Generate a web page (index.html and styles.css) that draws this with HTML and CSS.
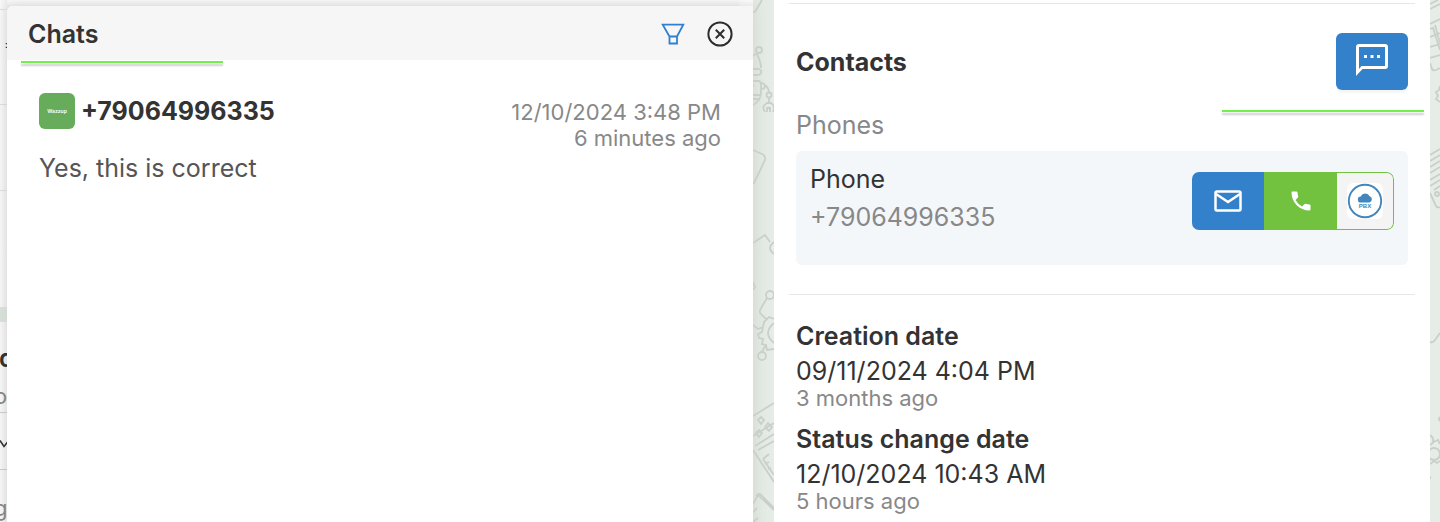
FILE: index.html
```
<!DOCTYPE html>
<html lang="en">
<head>
  <meta charset="UTF-8">
  <meta name="viewport" content="width=device-width, initial-scale=1.0">
  <title>Chats</title>
  <link rel="stylesheet" href="styles.css">
</head>
<body>
  <div class="page">
    <!-- Edge of the page under the chat panel -->
    <aside class="under-page">
      <div class="under-row row-top"></div>
      <div class="under-row row-equals">=</div>
      <div class="under-row row-middle"></div>
      <div class="under-row row-empty"></div>
      <div class="under-gap"></div>
      <div class="under-text strong">d</div>
      <div class="under-text">o</div>
      <div class="under-select">
        <svg width="14" height="10" viewBox="0 0 14 10"><path d="M0 1.5L4 7.500L10 0" fill="none" stroke="#333" stroke-width="1.6"/></svg>
      </div>
      <div class="under-text last">g</div>
    </aside>

    <section class="chat-panel">
      <header class="chat-header">
        <h2>Chats</h2>
        <div class="chat-tools">
          <button class="icon-button" aria-label="Filter">
            <svg width="24" height="24" viewBox="0 0 24 24" fill="none" stroke="#2f80d0" stroke-width="1.8"><path d="M1.700 2.600H22.300L16 14.500H8.500ZM8.500 14.500V21.500H16V14.500"/></svg>
          </button>
          <button class="icon-button" aria-label="Close">
            <svg width="26" height="26" viewBox="0 0 26 26" fill="none" stroke="#2d2d2d" stroke-width="2"><circle cx="13" cy="13" r="11.600"/><path d="M8.800 8.800l8.400 8.400M17.200 8.800l-8.400 8.400"/></svg>
          </button>
        </div>
      </header>
      <div class="marker"></div>
      <article class="chat-item">
        <div class="chat-row">
          <div class="chat-name">
            <span class="avatar">Wazzup</span>
            <h3>+79064996335</h3>
          </div>
          <div class="chat-time">
            <p>12/10/2024 3:48 PM</p>
            <p>6 minutes ago</p>
          </div>
        </div>
        <p class="chat-message">Yes, this is correct</p>
      </article>
    </section>

    <div class="pattern pattern-left">
      <svg width="21" height="522" viewBox="0 0 21 522">
        <path d="M0 12h1q1 0 1.500-1L9 0"/>
        <circle cx="6" cy="50" r="3"/>
        <path d="M4 53l-4 3M4 54q4 8 4 14M0 69h6q3 1 2 4q-1 2-3 2H0M0 81h5q3 0 3 3v8q0 9-8 13M0 86h1M0 95h8M0 99h7M8 83q4 0 4 3t-4 3M12 85q4 3 4 8M16 98v5M12 112q-4-6 2-9h4q5 3 2 9M14 112v-4h3v4"/>
        <circle cx="16" cy="95" r="2.500"/>
        <path d="M0 150l9 4q4 2 3 6L1 183H0M0 243l12-8 5 7M21 242q-8 6 0 12M0 282l2 5-2 3"/>
        <circle cx="17" cy="295" r="4"/>
        <circle cx="9" cy="356" r="4"/>
        <path d="M14 298l-7 12q-1 3 2 5l4 4M0 325l5 4 5-2 1-5 5-5 5 2M10 327l-1 5-4 2 1 4 4 1-1 5 4 1 1 5 7-1M9 352l3-6M21 323q-12 10 0 20M0 416l21-13M0 436l21-13M2 446l19-12M5 450l16-9M0 450l21 32M10 459l6-5M10 459l11 16M12 464l4-2M15 469l3-1M0 504l5-9 16 15M3 496q3-4 6 0l12 12M0 512l4-4M0 522l5-4"/>
        <path d="M5 420l3-3 3 3-3 4ZM12 427l3-4 4 4-3 4ZM3 433l3-3 3 3-3 4Z"/>
      </svg>
    </div>

    <main class="card">
      <hr>
      <section class="contacts">
        <div class="contacts-header">
          <h2 class="contacts-title">Contacts</h2>
          <button class="message-button" aria-label="Open chat">
            <svg width="32" height="32" viewBox="0 0 32 32"><path fill="#fff" fill-rule="evenodd" d="M0 32V3Q0 0 3 0H29Q32 0 32 3V22Q32 25 29 25H6.500ZM3 25L5.500 22H29V3H3Z"/><path fill="#fff" d="M8 11h3v3H8zM14.500 11h3v3h-3zM21 11h3v3h-3z"/></svg>
          </button>
        </div>
        <div class="marker marker-right"></div>
        <p class="label">Phones</p>
        <div class="phone-box">
          <div>
            <p class="phone-title">Phone</p>
            <p class="phone-number">+79064996335</p>
          </div>
          <div class="phone-actions">
            <button class="mail" aria-label="Send message">
              <svg width="28" height="22" viewBox="0 0 28 22" fill="none" stroke="#fff" stroke-width="2.500"><rect x="1.500" y="1.500" width="25" height="19" rx="1.500"/><path d="M2 4l12 8 12-8"/></svg>
            </button>
            <button class="call" aria-label="Call">
              <svg width="20" height="20" viewBox="0 0 20 20"><path fill="#fff" d="M1 .5H5.500Q6.500.5 6.500 1.500Q6.600 3.500 7.200 5.300Q7.400 6 7 6.400L4.500 9Q7 13.500 11 15.500L13.600 13Q14.100 12.600 14.700 12.800Q16.500 13.400 18.500 13.500Q19.500 13.500 19.500 14.500V18.500Q19.500 19.500 18.500 19.500C8.500 19.500.500 11.500.500 1.500Q.500.500 1 .5Z"/></svg>
            </button>
            <button class="pbx" aria-label="PBX">
              <svg width="36" height="36" viewBox="0 0 36 36"><rect width="36" height="36" rx="6" fill="#fff"/><circle cx="18" cy="18" r="16.200" fill="none" stroke="#4385bd" stroke-width="1.900"/><path fill="#4385bd" d="M14 19.500a3 3 0 0 1-.3-6 5 5 0 0 1 9-.2 3.200 3.200 0 0 1-.5 6.200Z"/><text x="18" y="25" text-anchor="middle">PBX</text></svg>
            </button>
          </div>
        </div>
      </section>
      <hr>
      <dl class="dates">
        <div class="date">
          <dt>Creation date</dt>
          <dd>09/11/2024 4:04 PM</dd>
          <dd class="ago">3 months ago</dd>
        </div>
        <div class="date">
          <dt>Status change date</dt>
          <dd>12/10/2024 10:43 AM</dd>
          <dd class="ago">5 hours ago</dd>
        </div>
      </dl>
    </main>

    <div class="pattern">
      <svg width="10" height="522" viewBox="0 0 10 522">
        <path d="M0 4L8 0M0 9l10-5M0 24l10-5M0 29l3-1 7 22M0 37l10-4M0 47l10-3M0 58l10-3M0 63l2 6q1 2 4 1l4-2M5 25l5 18M10 86l-1 4-3 2 2 4-2 3 4 3M0 155l10-6M0 161l10-6M0 167l10-6M0 173l10-6M0 180l10-6M0 186l10-6M0 193l6 13q1 2 4 1M4 190l6-4"/>
        <circle cx="7" cy="194" r="2"/>
        <path d="M0 342q3 1 5-2l5-7M10 417q-2 2 0 4M0 435l3 3v4l5-2 2 4M0 445l4-3M0 464l4-3 3 2 3-2M0 476v3"/>
        <circle cx="4" cy="454" r="6"/>
      </svg>
    </div>
  </div>
</body>
</html>
```
FILE: styles.css
```
* {
  box-sizing: border-box;
}

body {
  margin: 0;
  font-family: Inter, "Liberation Sans", sans-serif;
  font-size: 25px;
  color: #333;
  background-color: #e6ede7;
}

h2, h3, p, dl, dd {
  margin: 0;
}

h2, h3 {
  font-size: 25px;
  line-height: 32px;
  font-weight: 600;
}

h3,
.contacts-title {
  font-weight: 700;
}

button {
  display: flex;
  align-items: center;
  justify-content: center;
  margin: 0;
  padding: 0;
  border: none;
  cursor: pointer;
}

.page {
  display: grid;
  grid-template-columns: 7px 746fr 21px 656fr 10px;
  height: 100vh;
  overflow: hidden;
  background: linear-gradient(#f8f8f8, #ebebeb) no-repeat 0 0 / 739px 6px,
    linear-gradient(#fbfbfb, #f1f1f1) no-repeat 0 0 / 753px 6px;
}

/* Page under the panel */
.under-page {
  overflow: hidden;
  background: linear-gradient(to right, #f8f8f8, #ebebeb);
}

.under-row {
  border-bottom: 1px solid #dedede;
}

.row-top {
  height: 10px;
}

.row-equals {
  height: 95px;
  padding: 24px 0 0 4px;
  font-size: 16px;
}

.row-middle {
  height: 86px;
}

.row-empty {
  height: 116px;
  border: none;
}

.under-gap {
  height: 15px;
  background-color: #dae3db;
}

.under-text {
  padding-top: 6px;
  margin-left: -6px;
  font-size: 22px;
  line-height: 32px;
  color: #888;
}

.strong {
  padding-top: 20px;
  margin-left: -1px;
  font-size: 25px;
  font-weight: 600;
  color: #333;
}

.under-select {
  height: 58px;
  border-top: 1px solid #ccc;
  border-bottom: 1px solid #ccc;
  padding-top: 12px;
}

.last {
  padding-top: 22px;
}

/* Chat panel */
.chat-panel {
  margin-top: 6px;
  background-color: #fff;
  border-top-left-radius: 6px;
  box-shadow: 0 0 16px rgba(0, 0, 0, 0.08);
  overflow: hidden;
}

.chat-header {
  display: flex;
  align-items: center;
  justify-content: space-between;
  height: 54px;
  padding: 2px 20px 0 21px;
  background-color: #f6f6f6;
}

.chat-tools {
  display: flex;
  align-items: center;
  gap: 22px;
}

.icon-button {
  background: none;
}

.marker {
  width: 202px;
  height: 2px;
  margin: 1px 0 0 14px;
  background-color: #71f04c;
  box-shadow: 0 3px 2px rgba(0, 0, 0, 0.2);
}

.chat-item {
  padding: 30px 32px;
}

.chat-row {
  display: flex;
  justify-content: space-between;
}

.chat-name {
  display: flex;
  align-items: center;
  gap: 6px;
  height: 36px;
}

.avatar {
  display: flex;
  align-items: center;
  justify-content: center;
  width: 36px;
  height: 36px;
  border-radius: 6px;
  background-color: #67ac5b;
  color: #fff;
  font-size: 5px;
  font-weight: 600;
}

.chat-time {
  padding-top: 6px;
  font-size: 22px;
  line-height: 26px;
  text-align: right;
  color: #888;
}

.chat-message {
  padding-top: 1px;
  line-height: 32px;
  color: #555;
}

/* Background drawings */
.pattern {
  overflow: hidden;
}

.pattern svg {
  display: block;
  fill: none;
  stroke: #c9d0ca;
  stroke-width: 1.8;
}

.pattern-left {
  background: linear-gradient(to right, rgba(0, 0, 0, 0.02), transparent);
}

/* Card */
.card {
  padding-top: 3px;
  background-color: #fff;
}

hr {
  height: 1px;
  margin: 0 15px;
  border: none;
  background-color: #e7e7e7;
}

.contacts {
  padding: 29px 22px;
}

.contacts-header {
  display: flex;
  align-items: center;
  justify-content: space-between;
}

.message-button {
  width: 72px;
  height: 57px;
  padding-bottom: 4px;
  border-radius: 6px;
  background-color: #3380cb;
  box-shadow: 0 3px 2px rgba(0, 0, 0, 0.04);
}

.marker-right {
  margin: 20px -16px 0 auto;
}

.label {
  padding-bottom: 13px;
  line-height: 26px;
  color: #888;
}

.phone-box {
  display: flex;
  align-items: flex-start;
  justify-content: space-between;
  min-height: 114px;
  padding: 9px 14px;
  border-radius: 6px;
  background-color: #f3f7fa;
}

.phone-title,
.phone-number {
  line-height: 38px;
}

.phone-number {
  color: #888;
}

.phone-actions {
  display: flex;
  height: 58px;
  margin-top: 12px;
  border-radius: 7px;
  overflow: hidden;
}

.mail {
  width: 72px;
  background-color: #3380cb;
}

.call {
  width: 73px;
  background-color: #72c13f;
}

.pbx {
  width: 57px;
  border: 1px solid #72c13f;
  border-left: none;
  border-radius: 0 7px 7px 0;
  background-color: #f4f4f4;
}

.pbx text {
  font-size: 6px;
  font-weight: 700;
  fill: #4385bd;
}

.dates {
  padding: 22px;
}

.date {
  margin-bottom: 11px;
}

.date dt {
  line-height: 38px;
  font-weight: 600;
}

.date dd {
  line-height: 32px;
}

.date .ago {
  font-size: 22px;
  line-height: 22px;
  color: #888;
}
```
